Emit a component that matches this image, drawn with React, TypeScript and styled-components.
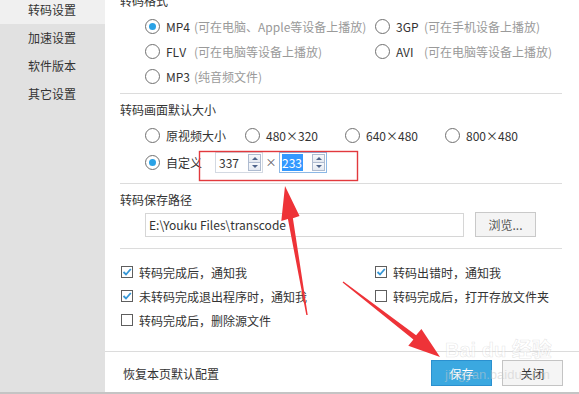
import styled, { createGlobalStyle } from "styled-components";

const GlobalStyle = createGlobalStyle`
  html, body {
    margin: 0;
    padding: 0;
    background: #ffffff;
  }
  body {
    font-family: "Noto Sans CJK SC", "Noto Sans", sans-serif;
    font-size: 12px;
    color: #333333;
  }
`;

const formats = [
  { name: "MP4", hint: "(可在电脑、Apple等设备上播放)", checked: true },
  { name: "3GP", hint: "(可在手机设备上播放)", checked: false },
  { name: "FLV", hint: "(可在电脑等设备上播放)", checked: false },
  { name: "AVI", hint: "(可在电脑等设备上播放)", checked: false },
  { name: "MP3", hint: "(纯音频文件)", checked: false },
];

const sizes = ["原视频大小", "480×320", "640×480", "800×480"];

const notices = [
  { text: "转码完成后，通知我", checked: true },
  { text: "转码出错时，通知我", checked: true },
  { text: "未转码完成退出程序时，通知我", checked: true },
  { text: "转码完成后，打开存放文件夹", checked: false },
  { text: "转码完成后，删除源文件", checked: false },
];

const navItems = ["转码设置", "加速设置", "软件版本", "其它设置"];

const App = () => {
  return (
    <>
      <GlobalStyle />
      <Window>
        <Sidebar>
          {navItems.map((item, i) => (
            <NavItem key={item} $active={i === 0}>
              {item}
            </NavItem>
          ))}
        </Sidebar>
        <Main>
          <Scroller>
            <Content>
              <Section>
                <Heading>转码格式</Heading>
                <FormatGrid>
                  {formats.map((f) => (
                    <OptionRow key={f.name}>
                      <Radio $checked={f.checked} />
                      <span>
                        <FormatName>{f.name}</FormatName>
                        <Hint>{f.hint}</Hint>
                      </span>
                    </OptionRow>
                  ))}
                </FormatGrid>
              </Section>

              <Section $top={7} $bottom={7}>
                <Heading>转码画面默认大小</Heading>
                <SizeGrid>
                  {sizes.map((s) => (
                    <OptionRow key={s} $height={26}>
                      <Radio />
                      <span>{s}</span>
                    </OptionRow>
                  ))}
                  <CustomRow>
                    <Radio $checked />
                    <CustomLabel>自定义</CustomLabel>
                    <Spinner>
                      <SpinValue>337</SpinValue>
                      <SpinButtons>
                        <SpinButton $dir="up" />
                        <SpinButton $dir="down" />
                      </SpinButtons>
                    </Spinner>
                    <Times>×</Times>
                    <Spinner $focused>
                      <SpinValue $selected>233</SpinValue>
                      <SpinButtons>
                        <SpinButton $dir="up" />
                        <SpinButton $dir="down" />
                      </SpinButtons>
                    </Spinner>
                  </CustomRow>
                </SizeGrid>
              </Section>

              <Section $top={7} $bottom={11}>
                <Heading>转码保存路径</Heading>
                <PathRow>
                  <PathInput>E:\Youku Files\transcode</PathInput>
                  <BrowseButton>浏览...</BrowseButton>
                </PathRow>
              </Section>

              <Section $top={11} $bottom={0} $noBorder>
                <CheckGrid>
                  {notices.map((n) => (
                    <CheckRow key={n.text}>
                      <Checkbox>
                        {n.checked && (
                          <svg width="10" height="10" viewBox="0 0 10 10">
                            <polyline
                              points="1.5,5 4,7.5 8.8,2"
                              fill="none"
                              stroke="#3596d6"
                              strokeWidth="1.8"
                            />
                          </svg>
                        )}
                      </Checkbox>
                      <span>{n.text}</span>
                    </CheckRow>
                  ))}
                </CheckGrid>
              </Section>
            </Content>
          </Scroller>
          <Footer>
            <ResetLink>恢复本页默认配置</ResetLink>
            <ButtonGroup>
              <DialogButton $primary>保存</DialogButton>
              <DialogButton>关闭</DialogButton>
            </ButtonGroup>
          </Footer>
        </Main>

        <Watermark>
          <WatermarkLogo>Bai du 经验</WatermarkLogo>
          <WatermarkUrl>jingyan.baidu.com</WatermarkUrl>
        </Watermark>

        <Annotations width="579" height="394" viewBox="0 0 579 394">
          <rect x="199.5" y="151.5" width="158" height="29" fill="none" stroke="#e2393d" strokeWidth="1.4" />
          <polygon
            points="306.3,315 287.9,219 281.3,221 285,186 299.5,216 292.9,218.2 307.7,315"
            fill="#ee3338"
          />
          <polygon
            points="342.6,282.6 413.4,339.4 408.3,345.8 440,357 421.4,329 416.1,335.3 343.4,281.4"
            fill="#ee3338"
          />
        </Annotations>
      </Window>
    </>
  );
};

export default App;

const Window = styled.div`
  position: relative;
  display: flex;
  width: 579px;
  height: 392px;
  border-bottom: 2px solid #c4c4c4;
  overflow: hidden;
  background: #ffffff;
`;

const Sidebar = styled.nav`
  width: 105px;
  flex-shrink: 0;
  background: #e1e1e1;
  margin-top: -4px;
`;

const NavItem = styled.div<{ $active?: boolean }>`
  height: 28px;
  line-height: 28px;
  padding-left: 28px;
  font-size: 12px;
  color: #333333;
  background: ${(p) => (p.$active ? "#f0f0f0" : "transparent")};
`;

const Main = styled.main`
  flex: 1;
  display: flex;
  flex-direction: column;
  min-width: 0;
`;

const Scroller = styled.div`
  height: 351px;
  overflow: hidden;
`;

const Content = styled.div`
  margin-top: -8px;
  padding-left: 15px;
  margin-right: 17px;
`;

const Section = styled.section<{ $top?: number; $bottom?: number; $noBorder?: boolean }>`
  padding-top: ${(p) => p.$top ?? 0}px;
  padding-bottom: ${(p) => p.$bottom ?? 4}px;
  border-bottom: ${(p) => (p.$noBorder ? "none" : "1px solid #dcdcdc")};
`;

const Heading = styled.div`
  height: 18px;
  line-height: 18px;
  font-size: 12px;
  color: #333333;
`;

const FormatGrid = styled.div`
  display: grid;
  grid-template-columns: 230px 1fr;
  margin-top: 4px;
  margin-left: 25px;
`;

const OptionRow = styled.label<{ $height?: number }>`
  display: flex;
  align-items: center;
  height: ${(p) => p.$height ?? 25}px;
  gap: 6px;
  font-size: 12px;
  color: #333333;
  white-space: nowrap;
`;

const Radio = styled.span<{ $checked?: boolean }>`
  position: relative;
  display: inline-block;
  box-sizing: border-box;
  width: 15px;
  height: 15px;
  flex-shrink: 0;
  border: 1px solid #707070;
  border-radius: 50%;
  background: #ffffff;

  &::after {
    content: "";
    display: ${(p) => (p.$checked ? "block" : "none")};
    position: absolute;
    left: 3px;
    top: 3px;
    width: 7px;
    height: 7px;
    border-radius: 50%;
    background: #2aa2e6;
  }
`;

const FormatName = styled.span`
  display: inline-block;
  width: 28px;
  color: #333333;
`;

const Hint = styled.span`
  color: #9a9a9a;
`;

const SizeGrid = styled.div`
  display: grid;
  grid-template-columns: repeat(4, 100px);
  margin-top: 3px;
  margin-left: 25px;
`;

const CustomRow = styled.div`
  grid-column: 1 / -1;
  display: flex;
  align-items: center;
  height: 28px;
  font-size: 12px;
  color: #333333;
`;

const CustomLabel = styled.span`
  margin-left: 6px;
  margin-right: 13px;
`;

const Spinner = styled.div<{ $focused?: boolean }>`
  display: flex;
  align-items: center;
  box-sizing: border-box;
  width: 48px;
  height: 21px;
  padding: 1px;
  border: 1px solid ${(p) => (p.$focused ? "#8cb8e6" : "#d3d9e2")};
  background: #ffffff;
`;

const SpinValue = styled.span<{ $selected?: boolean }>`
  flex: 1;
  display: flex;
  align-items: center;
  font-size: 12px;
  line-height: 17px;
  color: ${(p) => (p.$selected ? "#ffffff" : "#333333")};
  background: ${(p) =>
    p.$selected
      ? "linear-gradient(90deg, transparent 1px, #3399ff 1px, #3399ff 22px, transparent 22px)"
      : "transparent"};

  &::before {
    content: "";
    width: ${(p) => (p.$selected ? 1 : 2)}px;
  }
`;

const SpinButtons = styled.div`
  display: flex;
  flex-direction: column;
  width: 13px;
  height: 17px;
`;

const SpinButton = styled.span<{ $dir: "up" | "down" }>`
  flex: 1;
  display: flex;
  align-items: center;
  justify-content: center;
  box-sizing: border-box;
  border: 1px solid #aebbd0;
  background: linear-gradient(#f7f9fc, #e4e9f1);
  margin-top: ${(p) => (p.$dir === "down" ? "-1px" : "0")};

  &::after {
    content: "";
    width: 0;
    height: 0;
    border-left: 3px solid transparent;
    border-right: 3px solid transparent;
    ${(p) =>
      p.$dir === "up"
        ? "border-bottom: 3px solid #4d638a;"
        : "border-top: 3px solid #4d638a;"}
  }
`;

const Times = styled.span`
  width: 16px;
  text-align: center;
  color: #555555;
  font-size: 11px;
`;

const PathRow = styled.div`
  display: flex;
  align-items: center;
  margin-top: 3px;
  margin-left: 25px;
  height: 25px;
`;

const PathInput = styled.div`
  box-sizing: border-box;
  width: 319px;
  height: 24px;
  line-height: 22px;
  padding-left: 3px;
  border: 1px solid #d6d6d6;
  font-size: 12px;
  color: #333333;
  white-space: nowrap;
`;

const BrowseButton = styled.button`
  box-sizing: border-box;
  width: 61px;
  height: 25px;
  margin-left: 11px;
  padding: 0;
  border: 1px solid #c9c9c9;
  background: #f4f4f4;
  font-family: inherit;
  font-size: 12px;
  color: #555555;
`;

const CheckGrid = styled.div`
  display: grid;
  grid-template-columns: 254px 1fr;
  margin-left: 1px;
`;

const CheckRow = styled.label`
  display: flex;
  align-items: center;
  gap: 6px;
  height: 24px;
  font-size: 12px;
  color: #333333;
  white-space: nowrap;
`;

const Checkbox = styled.span`
  display: flex;
  align-items: center;
  justify-content: center;
  box-sizing: border-box;
  width: 12px;
  height: 12px;
  flex-shrink: 0;
  border: 1px solid #5e5e5e;
  background: #ffffff;
`;

const Footer = styled.footer`
  flex: 1;
  display: flex;
  align-items: center;
  justify-content: space-between;
  padding: 2px 16px 0 18px;
  border-top: 1px solid #dcdcdc;
`;

const ResetLink = styled.span`
  font-size: 12px;
  color: #333333;
`;

const ButtonGroup = styled.div`
  display: flex;
  gap: 10px;
`;

const DialogButton = styled.button<{ $primary?: boolean }>`
  box-sizing: border-box;
  width: 61px;
  height: 26px;
  padding: 0;
  font-family: inherit;
  font-size: 12px;
  border: 1px solid ${(p) => (p.$primary ? "#2b90cf" : "#c4c4c4")};
  background: ${(p) => (p.$primary ? "#3ba8e0" : "#f5f5f5")};
  color: ${(p) => (p.$primary ? "#ffffff" : "#333333")};
`;

const Watermark = styled.div`
  position: absolute;
  left: 445px;
  top: 337px;
  display: flex;
  flex-direction: column;
  pointer-events: none;
`;

const WatermarkLogo = styled.span`
  font-family: "Liberation Sans", "Noto Sans CJK SC", sans-serif;
  font-size: 20px;
  font-weight: bold;
  line-height: 26px;
  color: rgba(255, 255, 255, 0.5);
  -webkit-text-stroke: 0.6px rgba(170, 170, 170, 0.3);
  white-space: nowrap;
`;

const WatermarkUrl = styled.span`
  margin-top: 4px;
  font-family: "Liberation Sans", sans-serif;
  font-size: 13px;
  color: rgba(200, 200, 200, 0.5);
  white-space: nowrap;
`;

const Annotations = styled.svg`
  position: absolute;
  left: 0;
  top: 0;
  pointer-events: none;
`;
